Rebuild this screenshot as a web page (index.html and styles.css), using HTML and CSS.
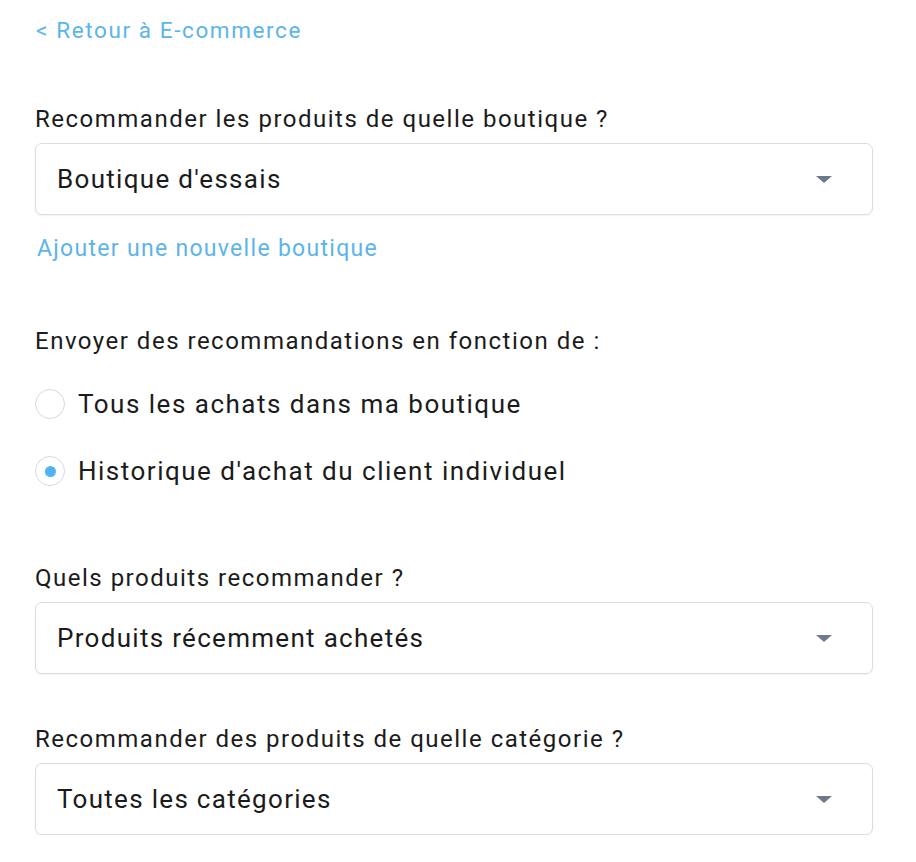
FILE: index.html
```html
<!DOCTYPE html>
<html lang="fr">
<head>
<meta charset="utf-8">
<link rel="stylesheet" href="styles.css">
</head>
<body>
<div class="page">
  <a class="back" href="#">&lt; Retour à E-commerce</a>

  <div class="field field-first">
    <div class="label">Recommander les produits de quelle boutique ?</div>
    <div class="select"><span>Boutique d'essais</span><span class="caret"></span></div>
    <a class="add" href="#">Ajouter une nouvelle boutique</a>
  </div>

  <div class="field field-radio">
    <div class="label">Envoyer des recommandations en fonction de :</div>
    <div class="radios">
      <label class="radio"><span class="circle"></span><span>Tous les achats dans ma boutique</span></label>
      <label class="radio"><span class="circle checked"></span><span>Historique d'achat du client individuel</span></label>
    </div>
  </div>

  <div class="field field-prod">
    <div class="label">Quels produits recommander ?</div>
    <div class="select"><span>Produits récemment achetés</span><span class="caret"></span></div>
  </div>

  <div class="field field-cat">
    <div class="label">Recommander des produits de quelle catégorie ?</div>
    <div class="select"><span>Toutes les catégories</span><span class="caret"></span></div>
  </div>
</div>
</body>
</html>
```
FILE: styles.css
```css
html, body {
  margin: 0;
  padding: 0;
  background: #ffffff;
}
body {
  font-family: Roboto, "Noto Sans", sans-serif;
  color: #1b1b1b;
}
.page {
  padding: 14px 43px 0 35px;
  display: flex;
  flex-direction: column;
}
.back {
  color: #5bb5ea;
  text-decoration: none;
  font-size: 22.5px;
  letter-spacing: 1.6px;
  line-height: 32px;
  margin-left: 1px;
  align-self: flex-start;
}
.label {
  font-size: 24px;
  letter-spacing: 1.5px;
  line-height: 32px;
  margin-bottom: 8px;
}
.field { display: flex; flex-direction: column; }
.field-first { margin-top: 57px; }
.field-radio { margin-top: 60px; }
.field-prod { margin-top: 75px; }
.field-cat { margin-top: 49px; }
.select {
  height: 70px;
  border: 1px solid #dcdcdc;
  border-radius: 7px;
  box-shadow: 0 1px 2px rgba(0,0,0,0.06);
  display: flex;
  align-items: center;
  justify-content: space-between;
  padding: 0 40px 0 21px;
  font-size: 26px;
  letter-spacing: 1.3px;
}
.caret {
  width: 0;
  height: 0;
  border-left: 8px solid transparent;
  border-right: 8px solid transparent;
  border-top: 7px solid #6c7a89;
}
.add {
  color: #5bb5ea;
  text-decoration: none;
  font-size: 23px;
  letter-spacing: 1.3px;
  line-height: 32px;
  margin-top: 18px;
  margin-left: 2px;
  align-self: flex-start;
}
.radios {
  display: flex;
  flex-direction: column;
  gap: 35px;
  margin-top: 23px;
}
.radio {
  display: flex;
  align-items: center;
  gap: 13px;
  font-size: 26px;
  letter-spacing: 1.5px;
  line-height: 32px;
}
.circle {
  width: 30px;
  height: 30px;
  box-sizing: border-box;
  border: 1px solid #d8d8d8;
  border-radius: 50%;
  display: flex;
  align-items: center;
  justify-content: center;
  flex: none;
}
.circle.checked::after {
  content: "";
  width: 11px;
  height: 11px;
  border-radius: 50%;
  background: #4fb3f6;
}
```
